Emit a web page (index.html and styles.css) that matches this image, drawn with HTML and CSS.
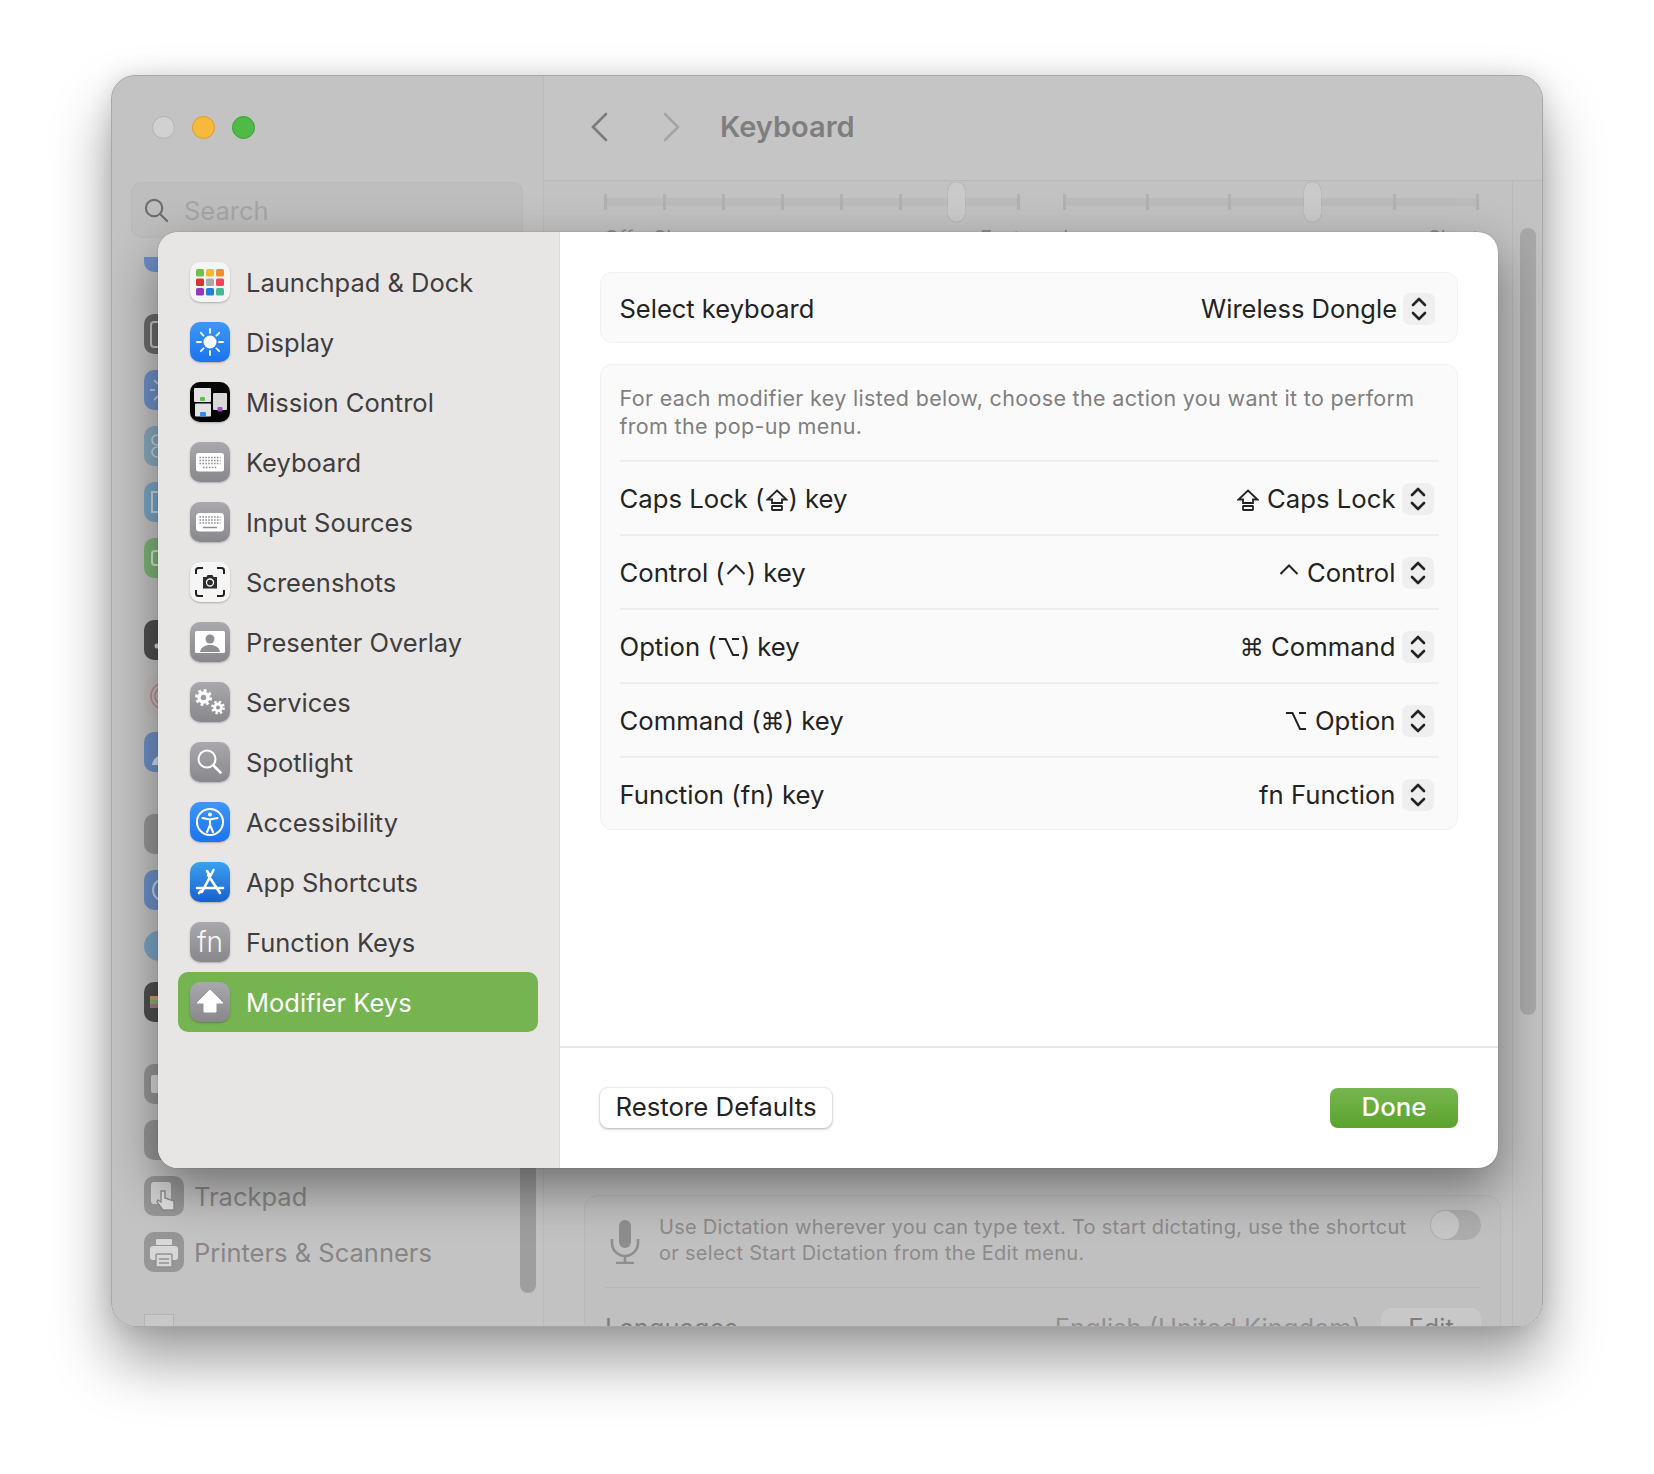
FILE: index.html
```html
<!DOCTYPE html>
<html lang="en">
<head>
    <meta charset="UTF-8">
    <title>Keyboard - Modifier Keys</title>
    <link rel="stylesheet" href="styles.css">
</head>
<body>
<div class="window">
    <!-- dimmed settings window behind the sheet -->
    <aside class="win-side">
        <div class="lights">
            <span class="light light-off"></span>
            <span class="light light-min"></span>
            <span class="light light-max"></span>
        </div>
        <div class="search">
            <svg class="search-icon" viewBox="0 0 26 26"><circle cx="10.5" cy="10.5" r="8.5"/><path d="M17 17l7 7"/></svg>
            <span>Search</span>
        </div>
        <div class="win-groups">
            <div class="win-group"><span class="peek peek-blue peek-clipped"></span></div>
            <div class="win-group">
                <span class="peek peek-dark"><svg viewBox="0 0 40 40"><rect x="7" y="8" width="22" height="25" rx="3" fill="none" stroke="#c4c4c4" stroke-width="2"/></svg></span>
                <span class="peek peek-blue"><svg viewBox="0 0 40 40"><path d="M6 20h5M10 10l4 4M10 30l4-4" stroke="#b9c9e4" stroke-width="2"/></svg></span>
                <span class="peek peek-teal"><svg viewBox="0 0 40 40" fill="none" stroke="#c9d6dc" stroke-width="1.600"><circle cx="13" cy="14" r="5"/><circle cx="13" cy="26" r="5"/></svg></span>
                <span class="peek peek-sky"><svg viewBox="0 0 40 40"><rect x="8" y="10" width="24" height="20" fill="none" stroke="#c4d6e4" stroke-width="2"/></svg></span>
                <span class="peek peek-green"><svg viewBox="0 0 40 40"><rect x="8" y="13" width="24" height="14" rx="3" fill="none" stroke="#d2e4cf" stroke-width="2"/></svg></span>
            </div>
            <div class="win-group">
                <span class="peek peek-black"><svg viewBox="0 0 40 40"><circle cx="13" cy="26" r="2.500" fill="#d6d6d6"/></svg></span>
                <span class="peek peek-light"><svg viewBox="0 0 40 40" fill="none" stroke="#bd8a8c" stroke-width="1.500"><circle cx="20" cy="20" r="13"/><circle cx="20" cy="20" r="9"/><circle cx="20" cy="20" r="5"/></svg></span>
                <span class="peek peek-blue"><svg viewBox="0 0 40 40"><circle cx="20" cy="15" r="6" fill="#d6dfee"/><path d="M8 33c1-7 6-10 12-10s11 3 12 10z" fill="#d6dfee"/></svg></span>
            </div>
            <div class="win-group">
                <span class="peek peek-grey"></span>
                <span class="peek peek-blue"><svg viewBox="0 0 40 40"><circle cx="20" cy="20" r="11" fill="none" stroke="#c3d0e6" stroke-width="2"/></svg></span>
                <span class="peek peek-sky peek-round"></span>
                <span class="peek peek-black"><svg viewBox="0 0 40 40"><rect x="6" y="14" width="28" height="4" fill="#c9a36c"/><rect x="6" y="18" width="28" height="4" fill="#8cab7c"/><rect x="6" y="22" width="28" height="4" fill="#a67f7f"/></svg></span>
            </div>
            <div class="win-group">
                <span class="peek peek-grey"><svg viewBox="0 0 40 40"><rect x="7" y="11" width="10" height="18" rx="2" fill="#d9d8d8"/></svg></span>
                <span class="peek peek-grey"></span>
                <div class="win-item">
                    <span class="peek peek-grey">
                        <svg viewBox="0 0 40 40"><rect x="7" y="6" width="20" height="22" rx="3" fill="#d3d2d2"/><path d="M17 15v11l-3-2-1 2 6 8h11v-9l-9-3v-7z" fill="#e2e1e1" stroke="#8d8c8c" stroke-width="1.400"/></svg>
                    </span>
                    <span>Trackpad</span>
                </div>
                <div class="win-item">
                    <span class="peek peek-grey">
                        <svg viewBox="0 0 40 40"><rect x="12" y="7" width="16" height="6" rx="1" fill="#d8d7d7"/><rect x="6" y="14" width="28" height="14" rx="3" fill="#d8d7d7"/><rect x="12" y="22" width="16" height="13" rx="1" fill="#d8d7d7" stroke="#929191" stroke-width="1.400"/><path d="M15 27h10M15 31h10" stroke="#929191" stroke-width="1.400"/></svg>
                    </span>
                    <span>Printers &amp; Scanners</span>
                </div>
            </div>
            <div class="win-group"><span class="peek-check"></span></div>
        </div>
        <div class="side-scroll"></div>
    </aside>

    <main class="win-main">
        <header class="win-head">
            <svg class="nav-arrow" viewBox="0 0 18 30"><path d="M16 2L3 15l13 13"/></svg>
            <svg class="nav-arrow nav-off" viewBox="0 0 18 30"><path d="M2 2l13 13L2 28"/></svg>
            <h1 class="win-title">Keyboard</h1>
        </header>
        <div class="win-body">
            <div class="sliders">
                <div class="slider-col">
                    <div class="slider slider-a">
                        <i></i><i></i><i></i><i></i><i></i><i></i><i></i><i></i>
                        <b class="thumb"></b>
                    </div>
                    <div class="slider-labels"><span>Off</span><span>Slow</span><span class="label-end">Fast</span></div>
                </div>
                <div class="slider-col">
                    <div class="slider slider-b">
                        <i></i><i></i><i></i><i></i><i></i><i></i>
                        <b class="thumb"></b>
                    </div>
                    <div class="slider-labels"><span>Long</span><span class="label-end">Short</span></div>
                </div>
            </div>
            <div class="dictation">
                <div class="dict-row">
                    <svg class="mic" viewBox="0 0 30 44"><rect x="9" y="0" width="12" height="28" rx="6" fill="#8f8e8e"/><path d="M2 19v4a13 13 0 0 0 26 0v-4M15 36v6M6 43h18" fill="none" stroke="#8f8e8e" stroke-width="2.600"/></svg>
                    <p class="dict-text">Use Dictation wherever you can type text. To start dictating, use the shortcut or select Start Dictation from the Edit menu.</p>
                    <span class="toggle"></span>
                </div>
                <div class="lang-row">
                    <span>Languages</span>
                    <span class="lang-value">English (United Kingdom)</span>
                    <span class="lang-edit">Edit</span>
                </div>
            </div>
            <div class="main-scroll"></div>
        </div>
    </main>

    <!-- modifier keys sheet -->
    <section class="sheet">
        <nav class="sheet-nav">
            <a class="nav-row"><span class="app-icon icon-white">
                <svg viewBox="0 0 40 40">
                    <rect x="6" y="7" width="8" height="7.500" rx="1.500" fill="#6fc04c"/><rect x="16" y="7" width="8" height="7.500" rx="1.500" fill="#f3b92d"/><rect x="26" y="7" width="8" height="7.500" rx="1.500" fill="#ee8f2e"/>
                    <rect x="6" y="16.500" width="8" height="7.500" rx="1.500" fill="#d13a2b"/><rect x="16" y="16.500" width="8" height="7.500" rx="1.500" fill="#a9aaaa"/><rect x="26" y="16.500" width="8" height="7.500" rx="1.500" fill="#ee475b"/>
                    <rect x="6" y="26" width="8" height="7.500" rx="1.500" fill="#9339c1"/><rect x="16" y="26" width="8" height="7.500" rx="1.500" fill="#1f7fdf"/><rect x="26" y="26" width="8" height="7.500" rx="1.500" fill="#45b899"/>
                </svg></span>Launchpad &amp; Dock</a>
            <a class="nav-row"><span class="app-icon icon-blue">
                <svg viewBox="0 0 40 40"><circle cx="20" cy="20" r="6.500" fill="#fff"/><path d="M20 7v4M20 29v4M7 20h4M29 20h4M10.800 10.800l2.800 2.800M26.400 26.400l2.800 2.800M10.800 29.200l2.800-2.800M26.400 13.600l2.800-2.800" stroke="#fff" stroke-width="1.800" stroke-linecap="round"/></svg></span>Display</a>
            <a class="nav-row"><span class="app-icon icon-black">
                <svg viewBox="0 0 40 40">
                    <rect x="4" y="6" width="17" height="14" rx="1" fill="#e3e3e3"/><rect x="23" y="11" width="14" height="17" rx="1" fill="#d8d8d8"/><rect x="5" y="21.500" width="16" height="13" rx="1" fill="#e3e3e3"/>
                    <rect x="10" y="15" width="5" height="4" rx="1" fill="#5cc24b"/><rect x="27.500" y="25" width="5" height="4.500" rx="1" fill="#9b4fd0"/><rect x="10" y="30" width="6" height="4.500" rx="1" fill="#2b8ff0"/>
                </svg></span>Mission Control</a>
            <a class="nav-row"><span class="app-icon icon-grey">
                <svg viewBox="0 0 40 40"><rect x="6" y="11" width="28" height="18.500" rx="2.500" fill="#fff"/><path d="M9.500 15.500h21M9.500 18.500h21M9.500 21.500h21M13 25.500h14" stroke="#8f8e93" stroke-width="1.500" stroke-dasharray="1.600 1.300"/></svg></span>Keyboard</a>
            <a class="nav-row"><span class="app-icon icon-grey">
                <svg viewBox="0 0 40 40"><rect x="6" y="11" width="28" height="18.500" rx="3.500" fill="#fff"/><path d="M9.500 15h21M9.500 18h21M9.500 21h21" stroke="#8f8e93" stroke-width="1.500" stroke-dasharray="1.600 1.300"/><path d="M13 25.500h14" stroke="#8f8e93" stroke-width="1.500"/></svg></span>Input Sources</a>
            <a class="nav-row"><span class="app-icon icon-white">
                <svg viewBox="0 0 40 40"><path d="M6 12V8.500A2.500 2.500 0 0 1 8.500 6H13M27 6h4.500A2.500 2.500 0 0 1 34 8.500V12M34 28v3.500a2.500 2.500 0 0 1-2.500 2.500H27M13 34H8.500A2.500 2.500 0 0 1 6 31.500V28" fill="none" stroke="#222" stroke-width="2"/><path d="M13 15h3.500l1-2h5l1 2H27v11.500H13z" fill="#2c2c2c"/><circle cx="20" cy="20.500" r="3.500" fill="#2c2c2c" stroke="#fff" stroke-width="1.300"/></svg></span>Screenshots</a>
            <a class="nav-row"><span class="app-icon icon-grey">
                <svg viewBox="0 0 40 40"><rect x="5" y="9" width="30" height="22" rx="1.500" fill="#fff"/><circle cx="20" cy="17" r="4.500" fill="#8f8e93"/><path d="M10 30c1-5 5-7 10-7s9 2 10 7z" fill="#8f8e93"/></svg></span>Presenter Overlay</a>
            <a class="nav-row"><span class="app-icon icon-grey">
                <svg viewBox="0 0 40 40" fill="none" stroke="#fff"><circle cx="13.500" cy="15.500" r="4.500" stroke-width="3.500"/><circle cx="13.500" cy="15.500" r="7" stroke-width="3" stroke-dasharray="2.800 2.700"/><circle cx="28" cy="25.500" r="3.400" stroke-width="2.800"/><circle cx="28" cy="25.500" r="5.600" stroke-width="2.500" stroke-dasharray="2.300 2.100"/></svg></span>Services</a>
            <a class="nav-row"><span class="app-icon icon-grey">
                <svg viewBox="0 0 40 40" fill="none" stroke="#fff" stroke-width="2"><circle cx="17" cy="17" r="8.500"/><path d="M23.500 23.500l7 7" stroke-linecap="round" stroke-width="2.600"/></svg></span>Spotlight</a>
            <a class="nav-row"><span class="app-icon icon-blue">
                <svg viewBox="0 0 40 40" fill="none" stroke="#fff"><circle cx="20" cy="20" r="13" stroke-width="2"/><circle cx="20" cy="12.500" r="2" fill="#fff" stroke="none"/><path d="M12.500 16l7.500 1.500 7.500-1.500M20 17.500v6M20 23l-3 7M20 23l3 7" stroke-width="2.100" stroke-linecap="round"/></svg></span>Accessibility</a>
            <a class="nav-row"><span class="app-icon icon-store">
                <svg viewBox="0 0 40 40" fill="none" stroke="#fff" stroke-width="2.600" stroke-linecap="round"><path d="M17 9l2.500 4M23.500 8L12 30M18 13l12 18M7 26h26M9 31l2-2"/></svg></span>App Shortcuts</a>
            <a class="nav-row"><span class="app-icon icon-grey icon-fn">fn</span>Function Keys</a>
            <a class="nav-row nav-active"><span class="app-icon icon-grey">
                <svg viewBox="0 0 40 40"><path d="M20 8L33 21h-7v9H14v-9H7z" fill="#fff" stroke="#fff" stroke-width="1" stroke-linejoin="round"/></svg></span>Modifier Keys</a>
        </nav>

        <div class="sheet-pane">
            <div class="sheet-content">
                <div class="card card-select">
                    <span>Select keyboard</span>
                    <span class="popup"><span>Wireless Dongle</span>
                        <span class="stepper"><svg viewBox="0 0 32 32"><path d="M10 12l6-6 6 6M10 20l6 6 6-6"/></svg></span>
                    </span>
                </div>
                <div class="card card-keys">
                    <p class="card-note">For each modifier key listed below, choose the action you want it to perform from the pop-up menu.</p>
                    <div class="key-row">
                        <span>Caps Lock (<svg class="sym-caps" viewBox="0 0 22 22"><path d="M11 1.500L20.500 10.500H16V14H6V10.500H1.500z"/><rect x="6" y="17" width="10" height="4" rx=".5"/></svg>) key</span>
                        <span class="popup"><span><svg class="sym-caps" viewBox="0 0 22 22"><path d="M11 1.500L20.500 10.500H16V14H6V10.500H1.500z"/><rect x="6" y="17" width="10" height="4" rx=".5"/></svg> Caps Lock</span>
                            <span class="stepper"><svg viewBox="0 0 32 32"><path d="M10 12l6-6 6 6M10 20l6 6 6-6"/></svg></span>
                        </span>
                    </div>
                    <div class="key-row">
                        <span>Control (<svg class="sym-ctrl" viewBox="0 0 20 11"><path d="M1.500 10L10 1.500 18.500 10"/></svg>) key</span>
                        <span class="popup"><span><svg class="sym-ctrl" viewBox="0 0 20 11"><path d="M1.500 10L10 1.500 18.500 10"/></svg> Control</span>
                            <span class="stepper"><svg viewBox="0 0 32 32"><path d="M10 12l6-6 6 6M10 20l6 6 6-6"/></svg></span>
                        </span>
                    </div>
                    <div class="key-row">
                        <span>Option (<svg class="sym-opt" viewBox="0 0 22 20"><path d="M1 2h6.500l7.500 16h6M14 2h7"/></svg>) key</span>
                        <span class="popup"><span><span class="sym-cmd">⌘</span> Command</span>
                            <span class="stepper"><svg viewBox="0 0 32 32"><path d="M10 12l6-6 6 6M10 20l6 6 6-6"/></svg></span>
                        </span>
                    </div>
                    <div class="key-row">
                        <span>Command (<span class="sym-cmd">⌘</span>) key</span>
                        <span class="popup"><span><svg class="sym-opt" viewBox="0 0 22 20"><path d="M1 2h6.500l7.500 16h6M14 2h7"/></svg> Option</span>
                            <span class="stepper"><svg viewBox="0 0 32 32"><path d="M10 12l6-6 6 6M10 20l6 6 6-6"/></svg></span>
                        </span>
                    </div>
                    <div class="key-row">
                        <span>Function (fn) key</span>
                        <span class="popup"><span>fn Function</span>
                            <span class="stepper"><svg viewBox="0 0 32 32"><path d="M10 12l6-6 6 6M10 20l6 6 6-6"/></svg></span>
                        </span>
                    </div>
                </div>
            </div>
            <footer class="sheet-foot">
                <button class="btn btn-plain">Restore Defaults</button>
                <button class="btn btn-done">Done</button>
            </footer>
        </div>
    </section>
</div>
</body>
</html>
```

FILE: styles.css
```css
html, body {
    margin: 0;
    height: 100%;
}
body {
    box-sizing: border-box;
    height: 1474px;
    padding: 75px 111px 0;
    background: #fff;
    font-family: Inter, "Noto Sans", sans-serif;
    overflow: hidden;
}
p {
    margin: 0;
}

/* window behind the sheet */
.window {
    position: relative;
    box-sizing: border-box;
    width: 1432px;
    height: 1252px;
    display: flex;
    border: 1px solid #a9a8a8;
    border-radius: 24px;
    background: #c4c3c3;
    overflow: hidden;
}
body::before {
    content: "";
    position: absolute;
    left: 111px;
    top: 75px;
    width: 1432px;
    height: 1252px;
    border-radius: 24px;
    box-shadow: 0 34px 60px rgba(0, 0, 0, .38), 0 0 24px rgba(0, 0, 0, .12);
}
.win-side {
    position: relative;
    box-sizing: border-box;
    width: 432px;
    flex: none;
    padding: 0 20px 0 19px;
    border-right: 1px solid #bcbbbb;
}
.lights {
    display: flex;
    gap: 17px;
    height: 106px;
    padding: 40px 0 0 21px;
    box-sizing: border-box;
}
.light {
    width: 23px;
    height: 23px;
    border-radius: 50%;
    box-sizing: border-box;
}
.light-off {
    background: #d2d1d1;
    border: 1px solid #b2b1b1;
}
.light-min {
    background: #f6b93b;
    border: 1px solid #d69d2a;
}
.light-max {
    background: #4fba45;
    border: 1px solid #3e9d36;
}
.search {
    display: flex;
    align-items: center;
    gap: 15px;
    height: 56px;
    padding-left: 13px;
    border-radius: 11px;
    background: #bfbebe;
    box-shadow: inset 0 0 0 1px #bababa;
    font-size: 25.500px;
    color: #a6a5a5;
}
.search-icon {
    width: 25px;
    height: 25px;
    fill: none;
    stroke: #6e6d6d;
    stroke-width: 2.200;
    stroke-linecap: round;
}
.win-groups {
    padding: 0 0 0 13px;
    margin-top: 19px;
}
.win-group {
    display: flex;
    flex-direction: column;
    gap: 16px;
    margin-bottom: 42px;
}
.win-item {
    display: flex;
    align-items: center;
    gap: 10px;
    font-size: 25.500px;
    color: #878686;
}
.peek {
    display: block;
    flex: none;
    width: 40px;
    height: 40px;
    border-radius: 10px;
    background: #9d9c9c;
}
.peek svg {
    display: block;
}
.peek-clipped {
    height: 15px;
    border-radius: 0 0 10px 10px;
}
.peek-round {
    height: 30px;
    margin: 5px 0;
    border-radius: 15px;
}
.peek-blue { background: #6d90c7; }
.peek-dark { background: #6a6a6a; }
.peek-teal { background: #87aabb; }
.peek-sky { background: #7ba5c4; }
.peek-green { background: #7eb477; }
.peek-black { background: #4f4f4f; }
.peek-light { background: #c4bfbf; }
.peek-grey { background: #979696; }
.peek-check {
    display: block;
    width: 30px;
    height: 30px;
    background: #c9c8c8;
    box-shadow: inset 0 0 0 1px #b5b4b4;
}
.side-scroll {
    position: absolute;
    right: 7px;
    top: 900px;
    bottom: 33px;
    width: 16px;
    border-radius: 8px;
    background: #9f9e9e;
}

.win-main {
    position: relative;
    flex: 1;
    display: flex;
    flex-direction: column;
    background: #c3c2c2;
}
.win-head {
    height: 105px;
    flex: none;
    box-sizing: border-box;
    display: flex;
    align-items: center;
    padding: 0 0 3px 46px;
    background: #c6c5c5;
    border-bottom: 1px solid #b9b8b8;
}
.nav-arrow {
    width: 18px;
    height: 30px;
    fill: none;
    stroke: #7c7b7b;
    stroke-width: 2.600;
    stroke-linecap: round;
    margin-right: 55px;
}
.nav-off {
    stroke: #a5a4a4;
    margin-right: 39px;
}
.win-title {
    margin: 0;
    font-size: 29px;
    font-weight: 600;
    color: #7f7e7e;
}
.win-body {
    flex: 1;
    position: relative;
    padding: 0 0 0 40px;
}
.win-body::after {
    content: "";
    position: absolute;
    right: 0;
    top: 0;
    bottom: 0;
    width: 29px;
    border-left: 1px solid #bab9b9;
}
.sliders {
    display: flex;
    gap: 43px;
    padding: 13px 0 0 20px;
    height: 1014px;
    box-sizing: border-box;
}
.slider-col {
    width: 416px;
}
.slider {
    position: relative;
    display: flex;
    justify-content: space-between;
    height: 16px;
    background: linear-gradient(#bcbbbb, #bcbbbb) center / 100% 8px no-repeat;
}
.slider i {
    display: block;
    width: 3px;
    background: #b2b1b1;
}
.slider-labels {
    display: flex;
    gap: 20px;
    margin-top: 16px;
    font-size: 20px;
    color: #8c8b8b;
}
.label-end {
    margin-left: auto;
}
.thumb {
    position: absolute;
    top: -12px;
    width: 17px;
    height: 40px;
    border-radius: 9px;
    background: #cbcaca;
    box-shadow: 0 0 1px rgba(0, 0, 0, .3);
}
.slider-a .thumb {
    left: 344px;
}
.slider-b .thumb {
    left: 241px;
}
.dictation {
    position: relative;
    box-sizing: border-box;
    width: 917px;
    height: 200px;
    padding: 0 19px 0 20px;
    border: 1px solid #bab9b9;
    border-bottom: 0;
    border-radius: 14px 14px 0 0;
    background: #c1c0c0;
}
.dict-row {
    display: flex;
    align-items: flex-start;
    height: 92px;
    border-bottom: 1px solid #b8b7b7;
    padding-top: 14px;
    box-sizing: border-box;
}
.mic {
    width: 30px;
    height: 44px;
    flex: none;
    margin: 10px 19px 0 5px;
}
.dict-text {
    flex: 1;
    margin-top: 4px;
    font-size: 20px;
    line-height: 26px;
    color: #8c8b8b;
    letter-spacing: .28px;
}
.toggle {
    position: relative;
    flex: none;
    width: 51px;
    height: 30px;
    border-radius: 15px;
    background: #aeadad;
}
.toggle::before {
    content: "";
    position: absolute;
    left: 1px;
    top: 1px;
    width: 28px;
    height: 28px;
    border-radius: 50%;
    background: #c8c7c7;
}
.lang-row {
    display: flex;
    align-items: flex-start;
    padding-top: 20px;
    font-size: 25.500px;
    color: #7f7e7e;
}
.lang-value {
    margin-left: auto;
    color: #929191;
    padding-top: 4px;
}
.lang-edit {
    width: 100px;
    height: 50px;
    margin-left: 20px;
    box-sizing: border-box;
    text-align: center;
    padding-top: 4px;
    border-radius: 10px;
    background: #c9c8c8;
}
.lang-row > span:first-child {
    padding-top: 4px;
}
.main-scroll {
    position: absolute;
    right: 6px;
    top: 47px;
    height: 787px;
    width: 16px;
    border-radius: 8px;
    background: #a9a8a8;
    z-index: 1;
}

/* sheet */
.sheet {
    position: absolute;
    left: 46px;
    top: 156px;
    width: 1340px;
    height: 936px;
    display: flex;
    border-radius: 20px;
    overflow: hidden;
    background: #fff;
    box-shadow: 0 20px 50px rgba(0, 0, 0, .42), 0 0 1px rgba(0, 0, 0, .5);
    z-index: 2;
}
.sheet-nav {
    box-sizing: border-box;
    width: 402px;
    flex: none;
    padding: 20px 21px 0 20px;
    background: #e8e6e5;
    border-right: 1px solid #dcdad9;
}
.nav-row {
    display: flex;
    align-items: center;
    gap: 16px;
    height: 60px;
    padding-left: 12px;
    border-radius: 10px;
    font-size: 25.500px;
    color: #3f3d3d;
}
.nav-active {
    background: #76b351;
    color: #fff;
}
.app-icon {
    display: block;
    flex: none;
    width: 40px;
    height: 40px;
    border-radius: 10px;
    box-shadow: 0 1px 2px rgba(0, 0, 0, .25);
}
.app-icon svg {
    display: block;
}
.icon-white {
    background: #f6f5f5;
}
.icon-blue {
    background: linear-gradient(#3e97f7, #1b73ef);
}
.icon-store {
    background: linear-gradient(#39a2ee, #1a5fd0);
}
.icon-black {
    background: #050505;
}
.icon-grey {
    background: linear-gradient(#a9a8ad, #88878c);
}
.icon-fn {
    color: #f6f6f6;
    font-size: 28px;
    line-height: 40px;
    font-weight: 300;
    text-align: center;
}
.sheet-pane {
    flex: 1;
    display: flex;
    flex-direction: column;
    min-width: 0;
}
.sheet-content {
    flex: 1;
    padding: 40px 40px 0;
}
.card {
    box-sizing: border-box;
    border: 1.500px solid #f1f1f1;
    border-radius: 12px;
    background: #fafafa;
    font-size: 25.500px;
    color: #232323;
}
.card-select {
    display: flex;
    align-items: center;
    justify-content: space-between;
    height: 71px;
    padding: 2px 22px 0 18.500px;
    margin-bottom: 21px;
}
.card-keys {
    height: 466px;
    padding: 0 18.500px;
    font-size: 25.700px;
}
.card-note {
    height: 95px;
    box-sizing: border-box;
    padding-top: 19px;
    font-size: 21.500px;
    line-height: 28px;
    letter-spacing: .33px;
    color: #7f7f7f;
}
.key-row {
    display: flex;
    align-items: center;
    justify-content: space-between;
    height: 74px;
    box-sizing: border-box;
    padding-right: 5px;
    border-top: 2px solid #eeeeee;
}
.key-row .stepper {
    margin-top: 1px;
}
.popup {
    display: flex;
    align-items: center;
    gap: 6px;
}
.sym-caps {
    width: 22px;
    height: 22px;
    margin: 0 1px;
    vertical-align: -3px;
    fill: none;
    stroke: #232323;
    stroke-width: 1.800;
}
.sym-ctrl {
    width: 20px;
    height: 11px;
    margin: 0 1px;
    vertical-align: 7px;
    fill: none;
    stroke: #232323;
    stroke-width: 2;
}
.sym-opt {
    width: 22px;
    height: 20px;
    margin: 0 1px;
    vertical-align: -1px;
    fill: none;
    stroke: #232323;
    stroke-width: 2;
}
.sym-cmd {
    font-family: "DejaVu Sans", sans-serif;
    font-size: 24px;
    line-height: 1;
}
.stepper {
    display: block;
    width: 32px;
    height: 32px;
    border-radius: 7px;
    background: #efefef;
}
.stepper svg {
    display: block;
    fill: none;
    stroke: #242424;
    stroke-width: 2.600;
    stroke-linecap: round;
    stroke-linejoin: round;
}
.sheet-foot {
    display: flex;
    align-items: center;
    justify-content: space-between;
    height: 122px;
    box-sizing: border-box;
    padding: 0 40px;
    border-top: 2px solid #e6e6e6;
}
.btn {
    height: 40px;
    padding: 0 0 3px;
    border: 0;
    border-radius: 8px;
    font-family: inherit;
    font-size: 25.800px;
}
.btn-plain {
    width: 232px;
    background: #fff;
    color: #222;
    box-shadow: 0 1px 3px rgba(0, 0, 0, .28), 0 0 0 1px rgba(0, 0, 0, .05);
}
.btn-done {
    width: 128px;
    color: #fff;
    font-weight: 500;
    background: linear-gradient(#77b64f, #5aa32d);
}
```
